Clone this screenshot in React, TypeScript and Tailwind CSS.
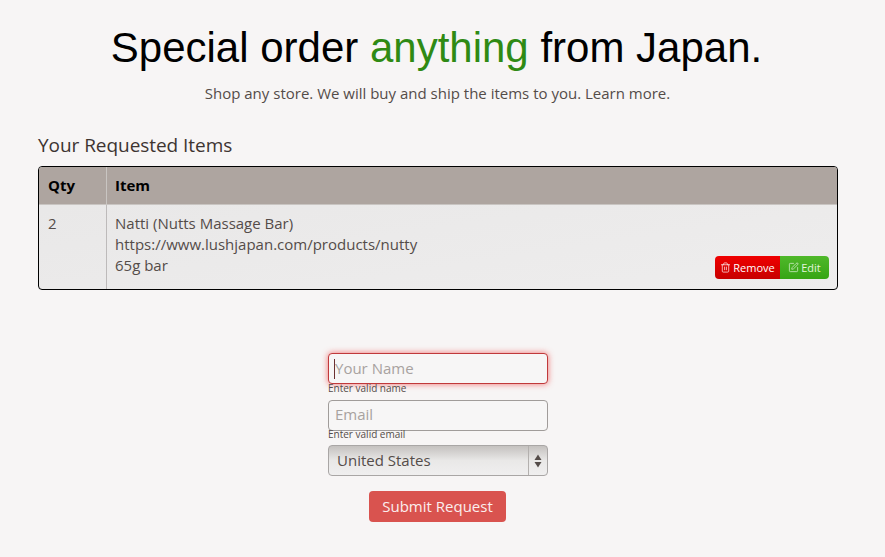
import { Trash2, SquarePen } from "lucide-react";

const openSans = "[font-family:'Open_Sans',sans-serif]";

export default function App() {
  return (
    <div className={`w-[885px] h-[557px] overflow-hidden bg-[#f7f5f5] text-[#544c49] ${openSans}`}>
      <div className="w-[875px] pt-[23px] flex flex-col items-center">
        <h1 className="pr-[2px] text-[42px] leading-[50px] text-black whitespace-nowrap [font-family:'Liberation_Sans',Arial,sans-serif]">
          Special order <span className="text-[#2f8a14]">anything</span> from Japan.
        </h1>
        <p className="mt-[10px] text-[15px] leading-[20px] whitespace-nowrap">
          Shop any store. We will buy and ship the items to you. Learn more.
        </p>
      </div>

      <div className="mx-[38px] w-[800px]">
        <h2 className="mt-[29px] text-[19px] leading-[26px] text-[#3d3431] tracking-[-0.05px]">Your Requested Items</h2>
        <div className="mt-[8px] h-[124px] border border-black rounded-[4px] overflow-hidden flex flex-col bg-gradient-to-br from-[#e8e7e7] to-[#eeeded]">
          <div className="h-[38px] flex bg-[#aea5a0] text-black text-[15px] font-bold leading-[36px] border-b border-[#c9c5c2]">
            <div className="w-[68px] pl-[9px] border-r border-[#c9c5c2]">Qty</div>
            <div className="pl-[8px]">Item</div>
          </div>
          <div className="flex-1 flex text-[15px] leading-[21px]">
            <div className="w-[68px] pl-[9px] pt-[8px] border-r border-[#bdbaba]">2</div>
            <div className="flex-1 pl-[8px] pt-[8px] relative">
              <div>Natti (Nutts Massage Bar)</div>
              <div>https://www.lushjapan.com/products/nutty</div>
              <div>65g bar</div>
              <div className="absolute right-[8px] bottom-[10px] flex h-[23px] text-[11px] font-medium text-white rounded-[4px] overflow-hidden">
                <span className="w-[65px] flex items-center justify-center gap-[2px] bg-gradient-to-b from-[#f00000] to-[#c70000]">
                  <Trash2 size={11} strokeWidth={1.5} />
                  Remove
                </span>
                <span className="w-[49px] flex items-center justify-center gap-[2px] bg-gradient-to-b from-[#4fb82a] to-[#36a513] text-[#e4f5dd]">
                  <SquarePen size={11} strokeWidth={1.5} />
                  Edit
                </span>
              </div>
            </div>
          </div>
        </div>
      </div>

      <div className="mt-[63px] ml-[328px] w-[220px] flex flex-col">
        <div className="h-[31px] rounded-[4px] border border-[#c0393b] shadow-[0_0_6px_rgba(240,70,70,0.75)] pl-[5px] flex items-center text-[15px] text-[#a8a2a0] bg-[#f7f6f6]">
          <span className="w-px h-[20px] bg-[#6b3030]" />
          <span>Your Name</span>
        </div>
        <div className="text-[10px] leading-[12px] -mt-[2px]">Enter valid name</div>
        <div className="mt-[6px] h-[31px] rounded-[4px] border border-[#a09c9a] pl-[6px] pb-[2px] flex items-center text-[15px] text-[#a8a2a0] bg-[#f7f6f6]">
          Email
        </div>
        <div className="text-[10px] leading-[12px] -mt-[3px]">Enter valid email</div>
        <div className="mt-[5px] h-[31px] rounded-[4px] border border-[#a9a6a5] flex items-center text-[15px] overflow-hidden bg-gradient-to-b from-[#c4c1bf] via-[#e9e8e7] to-[#f0efef]">
          <span className="flex-1 pl-[8px]">United States</span>
          <span className="w-[19px] h-full border-l border-[#b3b0ae] flex items-center justify-center">
            <svg width="8" height="14" viewBox="0 0 8 14" fill="#544c49">
              <path d="M4 0.5 7.5 6H.5z" />
              <path d="M4 13.5 7.5 8H.5z" />
            </svg>
          </span>
        </div>
        <button className="mt-[15px] ml-[41px] w-[137px] h-[31px] rounded-[4px] bg-[#d9534f] text-[#fbeeee] text-[15px]">
          Submit Request
        </button>
      </div>
    </div>
  );
}
